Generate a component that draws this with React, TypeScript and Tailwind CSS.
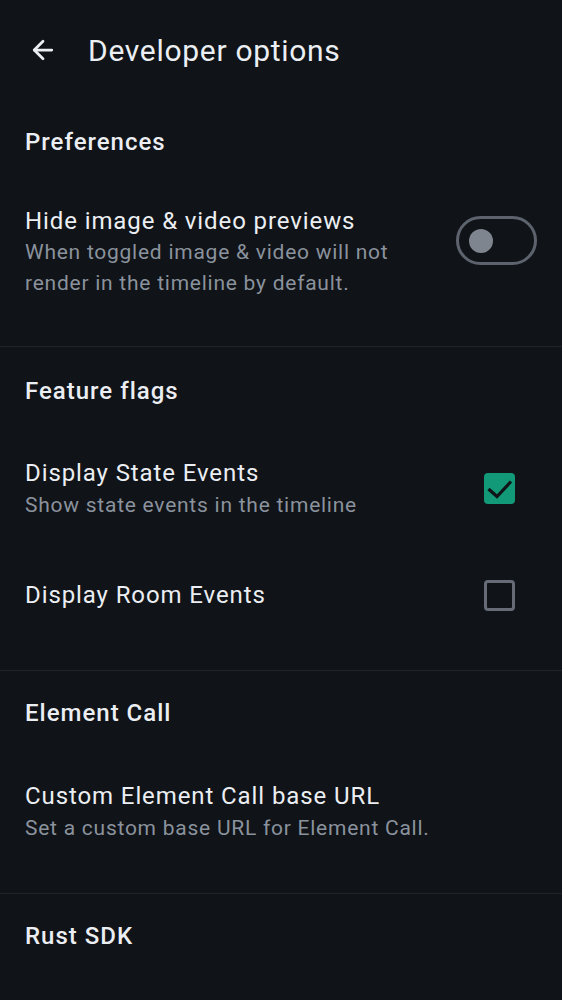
import { ArrowLeft } from 'lucide-react'

const SectionTitle = ({ children, shift = '' }: { children: string; shift?: string }) => (
  <div className={`h-[84px] flex items-center px-[25px] ${shift}`}>
    <h3 className="text-[24px] font-medium tracking-[1px] text-[#ebeef2]">{children}</h3>
  </div>
)

const Divider = () => <div className="h-px bg-[#1f232a]" />

const Checkbox = ({ checked }: { checked: boolean }) =>
  checked ? (
    <div className="w-[31px] h-[31px] rounded-[4px] bg-[#129a78]">
      <svg width="31" height="31" viewBox="0 0 31 31" fill="none">
        <path d="M4.5 16l8.5 7.5L27 8.5" stroke="#101317" strokeWidth="3.2" />
      </svg>
    </div>
  ) : (
    <div className="w-[31px] h-[31px] rounded-[4px] border-[3px] border-[#656c76]" />
  )

const titleCls = 'text-[24px] leading-[32px] tracking-[0.9px]'
const subCls = 'text-[21px] tracking-[0.75px] text-[#8a929d]'

export default function App() {
  return (
    <div
      className="w-[562px] h-[1000px] bg-[#101317] text-[#ebeef2] overflow-hidden"
      style={{ fontFamily: 'Roboto, "Noto Sans", sans-serif' }}
    >
      {/* top bar */}
      <div className="h-[100px] flex items-center pl-[28px]">
        <ArrowLeft size={30} strokeWidth={2.2} className="text-[#ebeef2]" />
        <h1 className="ml-[30px] text-[30px] tracking-[0.7px]">Developer options</h1>
      </div>

      <SectionTitle>Preferences</SectionTitle>
      <div className="flex items-start px-[25px] pt-[21px] pb-[47px]">
        <div className="flex-1 pr-[20px]">
          <div className={titleCls}>Hide image &amp; video previews</div>
          <div className={`${subCls} leading-[31px]`}>
            When toggled image &amp; video will not render in the timeline by default.
          </div>
        </div>
        <div className="mt-[11px] w-[81px] h-[49px] rounded-full border-[3px] border-[#5c636d] flex items-center pl-[10px]">
          <div className="w-[24px] h-[24px] rounded-full bg-[#7e858f]" />
        </div>
      </div>
      <Divider />

      <SectionTitle shift="pt-[4px]">Feature flags</SectionTitle>
      <div className="flex items-center px-[25px] pt-[26px] pb-[28px]">
        <div className="flex-1">
          <div className={titleCls}>Display State Events</div>
          <div className={`${subCls} leading-[33px]`}>Show state events in the timeline</div>
        </div>
        <div className="mr-[22px] -mt-[2px]">
          <Checkbox checked />
        </div>
      </div>
      <div className="flex items-center px-[25px] pt-[29px] pb-[59px]">
        <div className={`flex-1 ${titleCls}`}>Display Room Events</div>
        <div className="mr-[22px]">
          <Checkbox checked={false} />
        </div>
      </div>
      <Divider />

      <SectionTitle>Element Call</SectionTitle>
      <div className="px-[25px] pt-[25px] pb-[48px]">
        <div className={titleCls}>Custom Element Call base URL</div>
        <div className={`${subCls} leading-[33px]`}>Set a custom base URL for Element Call.</div>
      </div>
      <Divider />

      <SectionTitle>Rust SDK</SectionTitle>
    </div>
  )
}
